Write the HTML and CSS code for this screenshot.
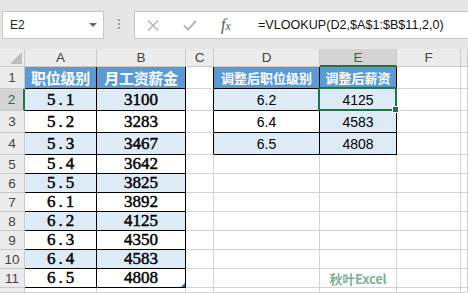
FILE: index.html
```html
<!DOCTYPE html>
<html lang="zh-CN">
<head>
    <meta charset="UTF-8">
    <title>VLOOKUP</title>
    <link rel="stylesheet" href="styles.css">
</head>
<body>
<div class="app">
    <div class="toolbar">
        <div class="namebox">
            <span>E2</span>
            <svg class="drop" width="8" height="4" viewBox="0 0 8 4"><path d="M0 0H8L4 4Z" fill="#666"/></svg>
        </div>
        <div class="grip">
            <svg width="3" height="12" viewBox="0 0 3 12">
                <rect x="0" y="0" width="2" height="2" fill="#a0a0a0"/>
                <rect x="0" y="4" width="2" height="2" fill="#a0a0a0"/>
                <rect x="0" y="8" width="2" height="2" fill="#a0a0a0"/>
            </svg>
        </div>
        <div class="formula">
            <span class="fbtn">
                <svg width="12" height="11" viewBox="0 0 12 11"><path d="M1 0.5L11 10.5M11 0.5L1 10.5" stroke="#b4b4b4" stroke-width="1.4" fill="none"/></svg>
            </span>
            <span class="fbtn">
                <svg width="14" height="11" viewBox="0 0 14 11"><path d="M1 5.5L5 9.5L13 1" stroke="#b4b4b4" stroke-width="2" fill="none"/></svg>
            </span>
            <span class="fbtn fx">f<small>x</small></span>
            <span class="ftext">=VLOOKUP(D2,$A$1:$B$11,2,0)</span>
        </div>
    </div>

    <div class="sheet">
        <!-- column headers -->
        <div class="hd corner"><svg width="12" height="12" viewBox="0 0 12 12"><path d="M12 0V12H0Z" fill="#bdbdbd"/></svg></div>
        <div class="hd">A</div>
        <div class="hd">B</div>
        <div class="hd">C</div>
        <div class="hd">D</div>
        <div class="hd hd-sel">E</div>
        <div class="hd">F</div>
        <div class="hd"></div>

        <!-- row 1 -->
        <div class="rh">1</div>
        <div class="c tb th">职位级别</div>
        <div class="c tb th">月工资薪金</div>
        <div class="c edge"></div>
        <div class="c tb th th-sm">调整后职位级别</div>
        <div class="c tb th th-sm">调整后薪资</div>
        <div class="c"></div>
        <div class="c"></div>

        <!-- row 2 -->
        <div class="rh rh-sel">2</div>
        <div class="c tb band num">5.1</div>
        <div class="c tb band mono">3100</div>
        <div class="c edge"></div>
        <div class="c tb band sans">6.2</div>
        <div class="c tb band sans active">4125<span class="sel"><span class="handle"></span></span></div>
        <div class="c"></div>
        <div class="c"></div>

        <!-- row 3 -->
        <div class="rh">3</div>
        <div class="c tb num">5.2</div>
        <div class="c tb mono">3283</div>
        <div class="c edge"></div>
        <div class="c tb sans">6.4</div>
        <div class="c tb band sans">4583</div>
        <div class="c"></div>
        <div class="c"></div>

        <!-- row 4 -->
        <div class="rh">4</div>
        <div class="c tb band num">5.3</div>
        <div class="c tb band mono">3467</div>
        <div class="c edge"></div>
        <div class="c tb band sans">6.5</div>
        <div class="c tb band sans">4808</div>
        <div class="c"></div>
        <div class="c"></div>

        <!-- row 5 -->
        <div class="rh">5</div>
        <div class="c tb num">5.4</div>
        <div class="c tb mono">3642</div>
        <div class="c"></div>
        <div class="c"></div>
        <div class="c"></div>
        <div class="c"></div>
        <div class="c"></div>

        <!-- row 6 -->
        <div class="rh">6</div>
        <div class="c tb band num">5.5</div>
        <div class="c tb band mono">3825</div>
        <div class="c"></div>
        <div class="c"></div>
        <div class="c"></div>
        <div class="c"></div>
        <div class="c"></div>

        <!-- row 7 -->
        <div class="rh">7</div>
        <div class="c tb num">6.1</div>
        <div class="c tb mono">3892</div>
        <div class="c"></div>
        <div class="c"></div>
        <div class="c"></div>
        <div class="c"></div>
        <div class="c"></div>

        <!-- row 8 -->
        <div class="rh">8</div>
        <div class="c tb band num">6.2</div>
        <div class="c tb band mono">4125</div>
        <div class="c"></div>
        <div class="c"></div>
        <div class="c"></div>
        <div class="c"></div>
        <div class="c"></div>

        <!-- row 9 -->
        <div class="rh">9</div>
        <div class="c tb num">6.3</div>
        <div class="c tb mono">4350</div>
        <div class="c"></div>
        <div class="c"></div>
        <div class="c"></div>
        <div class="c"></div>
        <div class="c"></div>

        <!-- row 10 -->
        <div class="rh">10</div>
        <div class="c tb band num">6.4</div>
        <div class="c tb band mono">4583</div>
        <div class="c"></div>
        <div class="c"></div>
        <div class="c"></div>
        <div class="c"></div>
        <div class="c"></div>

        <!-- row 11 -->
        <div class="rh">11</div>
        <div class="c tb num">6.5</div>
        <div class="c tb mono resize">4808</div>
        <div class="c"></div>
        <div class="c"></div>
        <div class="c mark">秋叶Excel</div>
        <div class="c"></div>
        <div class="c"></div>

        <!-- row 12 (cut off) -->
        <div class="rh"></div>
        <div class="c"></div>
        <div class="c"></div>
        <div class="c"></div>
        <div class="c"></div>
        <div class="c"></div>
        <div class="c"></div>
        <div class="c"></div>
    </div>
</div>
</body>
</html>
```

FILE: styles.css
```css
* {
    margin: 0;
    padding: 0;
    box-sizing: border-box;
}

body {
    background: #ffffff;
    font-family: "Liberation Sans", Arial, sans-serif;
}

.app {
    width: 468px;
    height: 293px;
    overflow: hidden;
}

/* formula bar */
.toolbar {
    height: 49px;
    background: #e6e6e6;
    display: flex;
    align-items: flex-start;
    padding-top: 11px;
}

.namebox {
    margin-left: 2px;
    width: 102px;
    height: 28px;
    background: #ffffff;
    border: 1px solid #c6c6c6;
    display: flex;
    align-items: center;
    justify-content: space-between;
    padding: 0 6px 0 6px;
    font-size: 12px;
    color: #222;
}

.namebox span {
    padding-left: 1px;
}

.grip {
    width: 30px;
    height: 28px;
    display: flex;
    align-items: center;
    justify-content: center;
    padding-left: 1px;
}

.formula {
    flex: 1;
    margin-right: -6px;
    height: 28px;
    background: #ffffff;
    border: 1px solid #c6c6c6;
    display: flex;
    align-items: center;
    padding-left: 12px;
}

.fbtn {
    width: 36px;
    display: flex;
    justify-content: flex-start;
    align-items: center;
}

.fx {
    font-family: "Liberation Serif", serif;
    font-style: italic;
    font-size: 16px;
    color: #555;
    padding-left: 2px;
    width: 39px;
}

.fx small {
    font-size: 12px;
    margin-top: 3px;
}

.ftext {
    font-size: 12.6px;
    color: #111;
    white-space: nowrap;
}

/* sheet grid */
.sheet {
    display: grid;
    grid-template-columns: 25px 72px 89px 28px 106px 77px 64px 1fr;
    grid-template-rows: 18px repeat(4, 22px) repeat(7, 19px) 1fr;
    height: 244px;
}

.hd, .rh {
    background: #ececec;
    border-right: 1px solid #c9c9c9;
    border-bottom: 1px solid #c9c9c9;
    display: flex;
    align-items: center;
    justify-content: center;
    font-size: 13.5px;
    color: #444;
}

.corner {
    justify-content: flex-end;
    align-items: flex-end;
    padding: 0 2px 2px 0;
}

.hd-sel {
    background: #d4d4d4;
    color: #217346;
    border-bottom: 2px solid #217346;
}

.rh-sel {
    background: #d4d4d4;
    color: #217346;
    border-right: 2px solid #217346;
}

.c {
    border-right: 1px solid #d4d4d4;
    border-bottom: 1px solid #d4d4d4;
    display: flex;
    align-items: center;
    justify-content: center;
    color: #000;
    white-space: nowrap;
}

/* bordered tables */
.tb {
    border-right-color: #000;
    border-bottom-color: #000;
}

.edge {
    border-right-color: #000;
}

.th {
    background: #5b9bd5;
    color: #ffffff;
    font-family: "Noto Sans CJK SC", sans-serif;
    font-weight: 700;
    font-size: 15px;
    letter-spacing: -0.3px;
}

.th-sm {
    font-size: 13px;
    letter-spacing: 0;
}

.band {
    background: #ddebf7;
}

.num, .mono {
    font-family: "Liberation Serif", serif;
    font-weight: 400;
    font-size: 17px;
    -webkit-text-stroke: 0.45px #000;
}

.num {
    letter-spacing: 3px;
    padding-left: 3px;
}

.sans {
    font-size: 14px;
}

/* active cell */
.active {
    position: relative;
}

.sel {
    position: absolute;
    top: -2px;
    left: -2px;
    right: -1px;
    bottom: -1px;
    border: 2px solid #217346;
}

.handle {
    position: absolute;
    right: -4px;
    bottom: -4px;
    width: 7px;
    height: 7px;
    background: #217346;
    border: 1px solid #ffffff;
}

.resize {
    position: relative;
}

.resize::after {
    content: "";
    position: absolute;
    right: 0;
    bottom: 0;
    border-style: solid;
    border-width: 0 0 4px 4px;
    border-color: transparent transparent #3e63b8 transparent;
}

.mark {
    font-family: "Noto Sans CJK SC", sans-serif;
    font-weight: 700;
    font-size: 13px;
    color: #80b298;
    letter-spacing: -0.2px;
}
```
